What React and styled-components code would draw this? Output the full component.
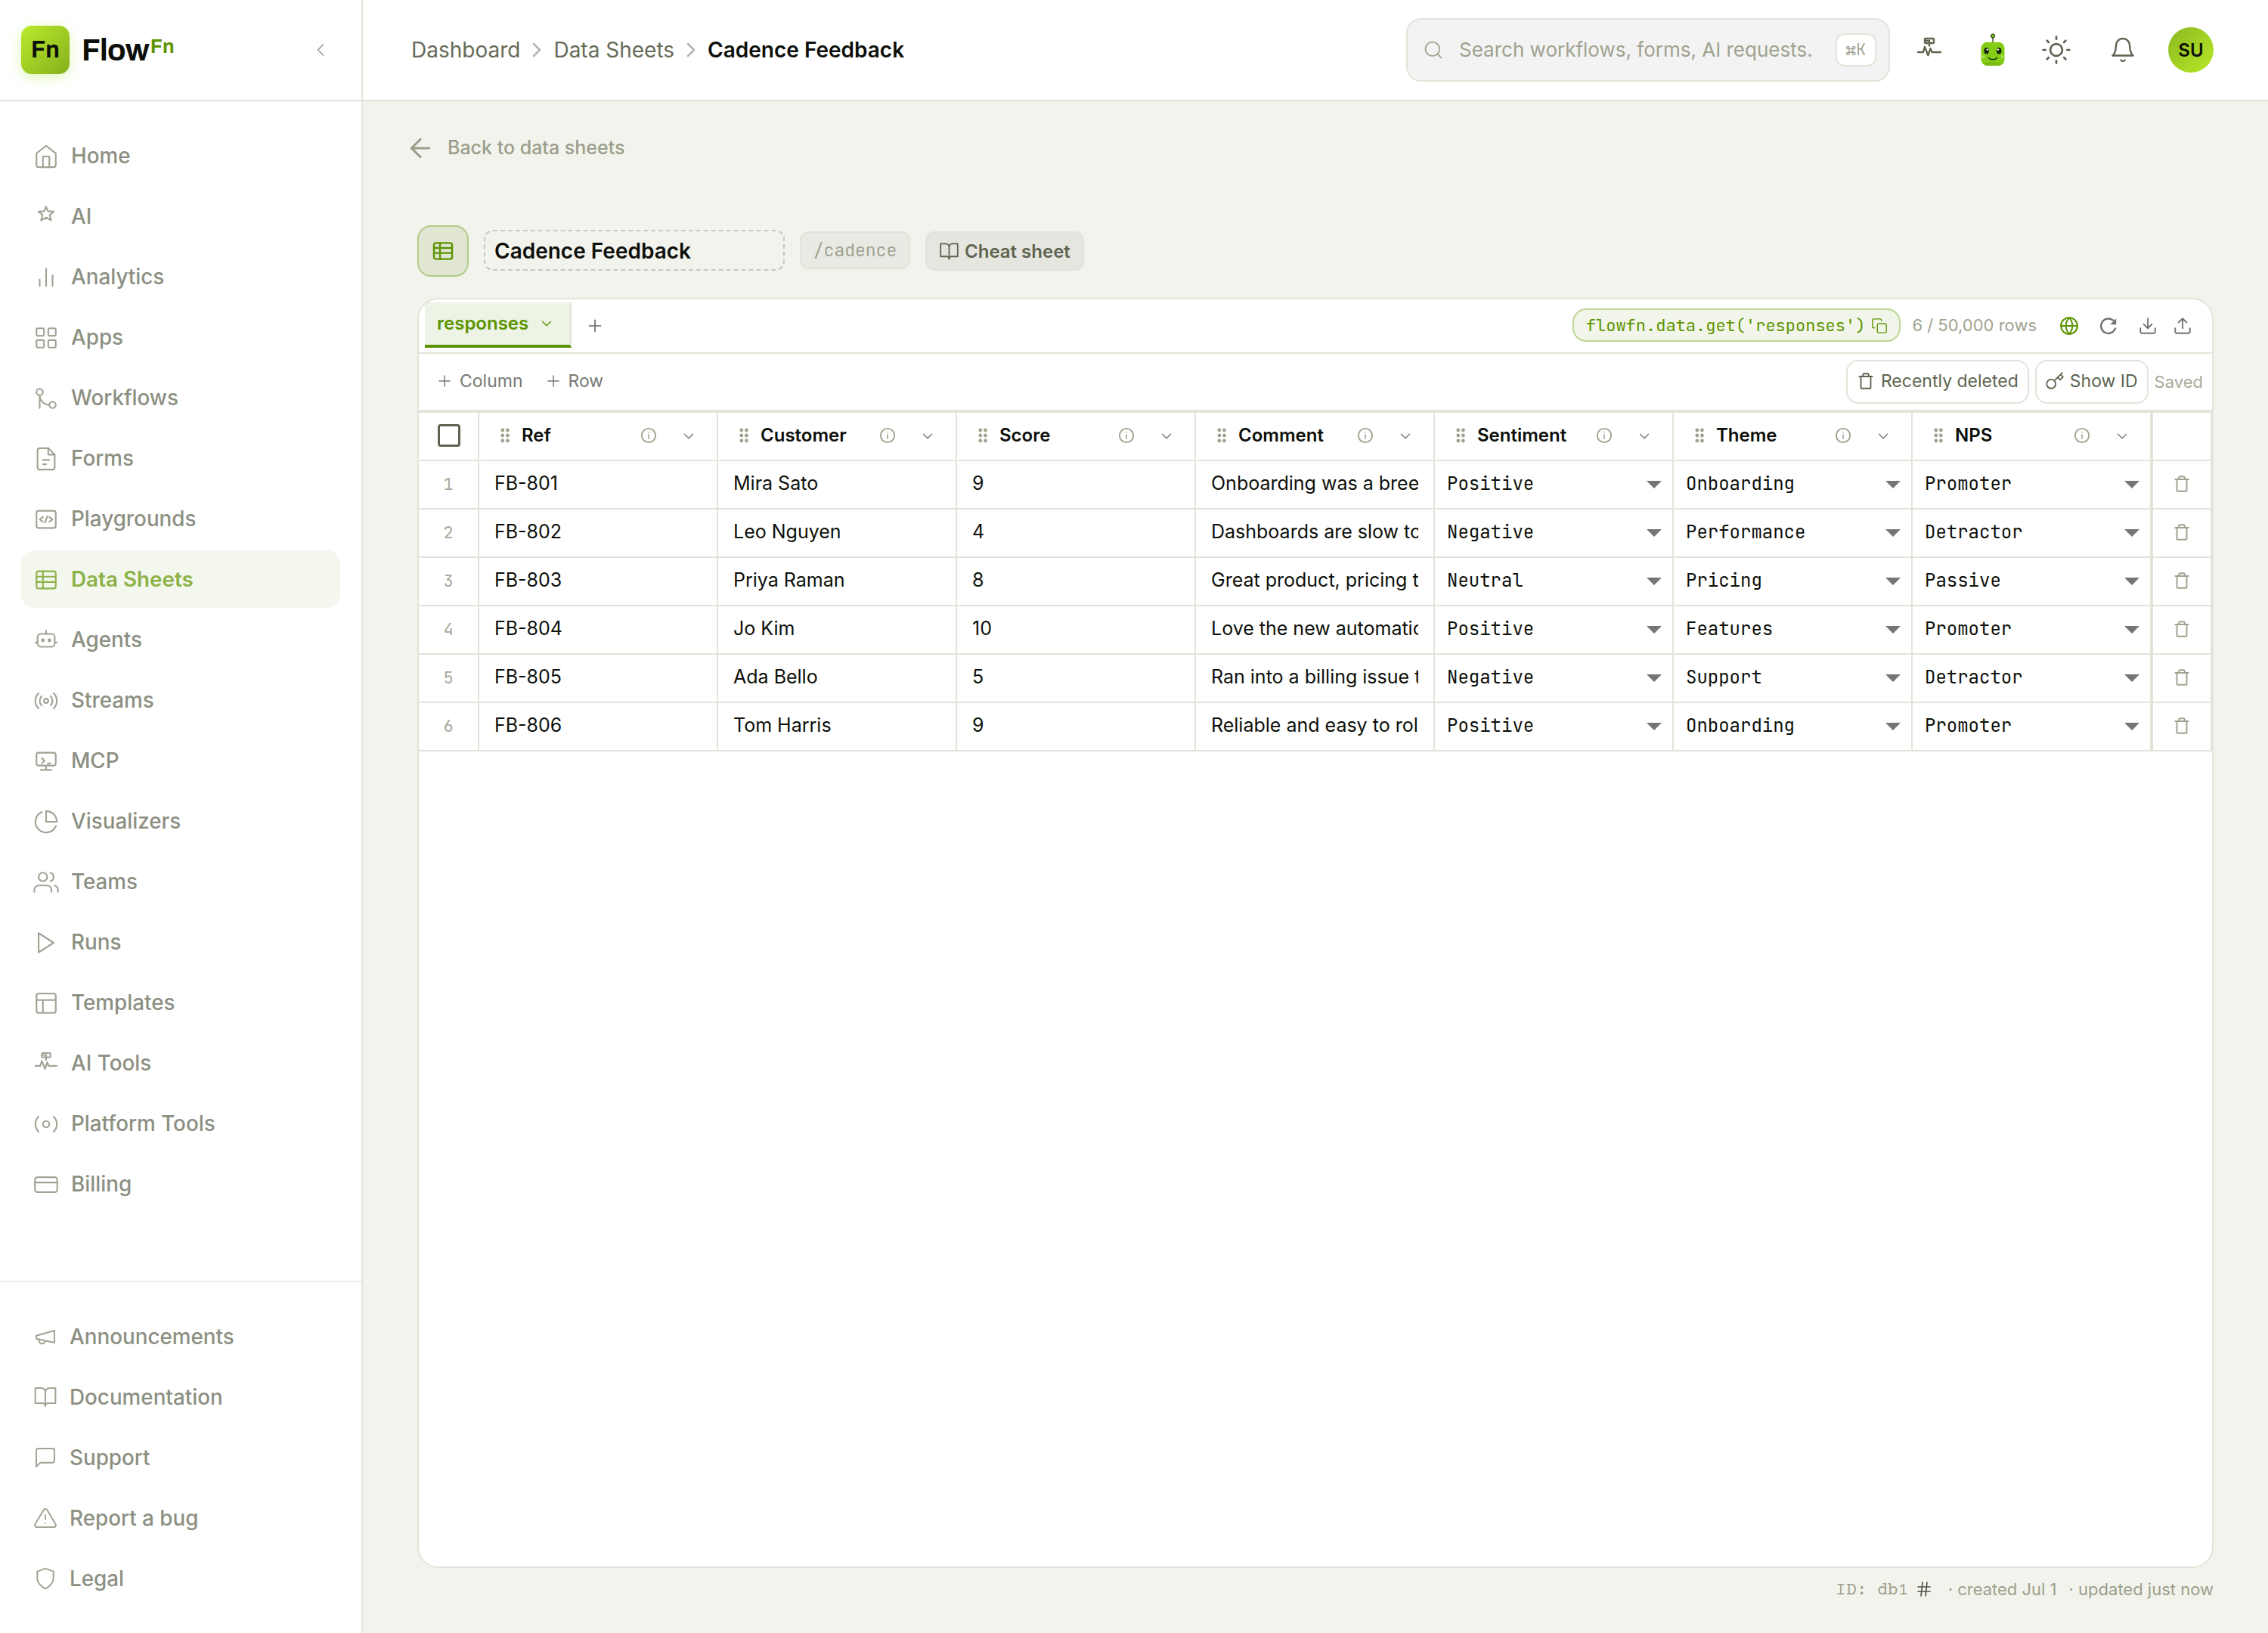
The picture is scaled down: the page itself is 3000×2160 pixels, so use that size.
import React from 'react';
import styled, { createGlobalStyle, css } from 'styled-components';

const sans = `Inter, "Liberation Sans", sans-serif`;
const display = `Archivo, "Liberation Sans", sans-serif`;
const mono = `"JetBrains Mono", "DejaVu Sans Mono", monospace`;
const courier = `"Courier Prime", "Liberation Mono", monospace`;

const c = {
  line: '#e2e4d9',
  lineSoft: '#ecede5',
  page: '#f2f3ec',
  ink: '#0d0f0a',
  text: '#666b58',
  muted: '#9fa28f',
  grey: '#777777',
  green: '#5c9400',
};

const GlobalStyle = createGlobalStyle`
  *, *::before, *::after { box-sizing: border-box; }
  body { margin: 0; background: ${c.page}; font-family: ${sans}; color: ${c.ink}; -webkit-font-smoothing: antialiased; }
  button { font: inherit; color: inherit; background: none; border: 0; padding: 0; margin: 0; }
  svg { display: block; flex: none; }
`;

/* ---------- icons ---------- */

const Icon = ({ size = 24, weight = 1.5, children }) => (
  <svg width={size} height={size} viewBox="0 0 24 24" fill="none" stroke="currentColor"
    strokeWidth={weight} strokeLinecap="round" strokeLinejoin="round">
    {children}
  </svg>
);

const glyphs = {
  home: <><path d="M3 9l9-7 9 7v11a2 2 0 0 1-2 2H5a2 2 0 0 1-2-2z" /><path d="M9 22V12h6v10" /></>,
  ai: <path d="M12 2.4l1.8 4.2 5.4.4-3.9 3.2 1.4 4.9-4.7-2.6-4.7 2.6 1.4-4.9L4.8 7l5.4-.4z" />,
  analytics: <path d="M18 20V10M12 20V4M6 20v-6" />,
  apps: <><rect x="3" y="3" width="7" height="7" rx="1" /><rect x="14" y="3" width="7" height="7" rx="1" /><rect x="14" y="14" width="7" height="7" rx="1" /><rect x="3" y="14" width="7" height="7" rx="1" /></>,
  workflows: <><circle cx="18" cy="18" r="3" /><circle cx="6" cy="6" r="3" /><path d="M6 21V9a9 9 0 0 0 9 9" /></>,
  forms: <><path d="M14 2H6a2 2 0 0 0-2 2v16a2 2 0 0 0 2 2h12a2 2 0 0 0 2-2V8z" /><path d="M14 2v6h6M9 13h6M9 17h3" /></>,
  playgrounds: <><rect x="3" y="4" width="18" height="16" rx="2" /><path d="M9 9.8L6 12l3 2.2M15 9.8l3 2.2-3 2.2M13.2 9l-2.2 6" /></>,
  sheets: <><rect x="3" y="4" width="18" height="16" rx="2" /><path d="M3 9h18M3 14h18M9 4v16" /></>,
  agents: <><rect x="4" y="6" width="16" height="12" rx="3" /><path d="M12 3v3M2 14h2M20 14h2" /><circle cx="9" cy="12" r="1" /><circle cx="15" cy="12" r="1" /></>,
  streams: <><circle cx="12" cy="12" r="2" /><path d="M16.24 7.76a6 6 0 0 1 0 8.49m-8.48-.01a6 6 0 0 1 0-8.49m11.31-2.82a10 10 0 0 1 0 14.14m-14.14 0a10 10 0 0 1 0-14.14" /></>,
  mcp: <><rect x="3" y="4" width="18" height="12" rx="2" /><path d="M7 20h10M12 16v4M8 9l2.6 2.5L8 14M13.5 14H16" /></>,
  visualizers: <><path d="M21.21 15.89A10 10 0 1 1 8 2.83" /><path d="M22 12A10 10 0 0 0 12 2v10z" /></>,
  teams: <><path d="M17 21v-2a4 4 0 0 0-4-4H5a4 4 0 0 0-4 4v2" /><circle cx="9" cy="7" r="4" /><path d="M23 21v-2a4 4 0 0 0-3-3.87M16 3.13a4 4 0 0 1 0 7.75" /></>,
  runs: <path d="M5 3l14 9-14 9z" />,
  templates: <><rect x="3" y="3" width="18" height="18" rx="2" /><path d="M3 9h18M9 21V9" /></>,
  aiTools: <><rect x="8" y="2" width="8" height="4" rx=".6" /><path d="M8.4 3.9h3.2M12 4v4.4M2 14h4.6L8 9.4l3 7.4 2-6L14.4 14H22" /></>,
  platform: <><circle cx="12" cy="12" r="3" /><path d="M19.07 4.93a10 10 0 0 1 0 14.14m-14.14 0a10 10 0 0 1 0-14.14" /></>,
  billing: <><rect x="1.6" y="5" width="20.8" height="14" rx="2.4" /><path d="M1.6 10h20.8" /></>,
  megaphone: <><path d="M3 11l18-5v12L3 14v-3z" /><path d="M11.6 16.8a3 3 0 1 1-5.8-1.6" /></>,
  book: <path d="M2 3h6a4 4 0 0 1 4 4v14a3 3 0 0 0-3-3H2zM22 3h-6a4 4 0 0 0-4 4v14a3 3 0 0 1 3-3h7z" />,
  message: <path d="M21 15a2 2 0 0 1-2 2H7l-4 4V5a2 2 0 0 1 2-2h14a2 2 0 0 1 2 2z" />,
  alert: <><path d="M10.29 3.86L1.82 18a2 2 0 0 0 1.71 3h16.94a2 2 0 0 0 1.71-3L13.71 3.86a2 2 0 0 0-3.42 0z" /><path d="M12 9v4M12 17h.01" /></>,
  shield: <path d="M12 22s8-4 8-10V5l-8-3-8 3v7c0 6 8 10 8 10z" />,
  left: <path d="M15 18l-6-6 6-6" />,
  right: <path d="M9 18l6-6-6-6" />,
  down: <path d="M6 9l6 6 6-6" />,
  arrowLeft: <path d="M19 12H5M12 19l-7-7 7-7" />,
  search: <><circle cx="11" cy="11" r="8" /><path d="M21 21l-4.35-4.35" /></>,
  sun: <><circle cx="12" cy="12" r="5" /><path d="M12 1v2M12 21v2M4.22 4.22l1.42 1.42M18.36 18.36l1.42 1.42M1 12h2M21 12h2M4.22 19.78l1.42-1.42M18.36 5.64l1.42-1.42" /></>,
  bell: <path d="M18 8A6 6 0 0 0 6 8c0 7-3 9-3 9h18s-3-2-3-9M13.73 21a2 2 0 0 1-3.46 0" />,
  plus: <path d="M12 5v14M5 12h14" />,
  copy: <><rect x="9" y="9" width="13" height="13" rx="2" /><path d="M5 15H4a2 2 0 0 1-2-2V4a2 2 0 0 1 2-2h9a2 2 0 0 1 2 2v1" /></>,
  globe: <><circle cx="12" cy="12" r="10" /><path d="M2 12h20M12 2a15.3 15.3 0 0 1 4 10 15.3 15.3 0 0 1-4 10 15.3 15.3 0 0 1-4-10 15.3 15.3 0 0 1 4-10z" /></>,
  refresh: <><path d="M20.4 15.2A9 9 0 1 1 17.6 5.2" /><path d="M21.4 3v7.4H14z" fill="currentColor" stroke="none" /></>,
  download: <path d="M21 15v4a2 2 0 0 1-2 2H5a2 2 0 0 1-2-2v-4M7 10l5 5 5-5M12 15V3" />,
  upload: <path d="M21 15v4a2 2 0 0 1-2 2H5a2 2 0 0 1-2-2v-4M17 8l-5-5-5 5M12 3v12" />,
  trash: <path d="M4 6.5h16M8.5 6.5v-2A1.5 1.5 0 0 1 10 3h4a1.5 1.5 0 0 1 1.5 1.5v2M6 6.5v13A1.5 1.5 0 0 0 7.5 21h9a1.5 1.5 0 0 0 1.5-1.5v-13" />,
  key: <path d="M21 2l-2 2m-7.61 7.61a5.5 5.5 0 1 1-7.778 7.778 5.5 5.5 0 0 1 7.777-7.777zm0 0L15.5 7.5m0 0l3 3L22 7l-3-3m-3.5 3.5L19 4" />,
  info: <><circle cx="12" cy="12" r="10" /><path d="M12 16.5V11M12 7.5h.01" strokeWidth="1.7" /></>,
  grip: <g fill="currentColor" stroke="none">{[5, 12, 19].map((y) => <React.Fragment key={y}><circle cx="8.8" cy={y} r="2.4" /><circle cx="15.4" cy={y} r="2.4" /></React.Fragment>)}</g>,
  hash: <path d="M4 9h16M4 15h16M10 3L8 21M16 3l-2 18" />,
};

const Robot = () => (
  <svg width="40" height="44" viewBox="0 0 40 44" fill="none">
    <path d="M20 5v8" stroke="#4b5a3a" strokeWidth="1.6" />
    <circle cx="20" cy="3.6" r="2.4" fill="#84cc16" stroke="#2c4a0c" strokeWidth="1.3" />
    <rect x="4.5" y="11.8" width="31" height="31" rx="8" fill="#84cc16" />
    <path d="M9 39.5c6-1.8 16-1.8 22 0 1 1.6-1 3.3-4 3.3H13c-3 0-5-1.7-4-3.3z" fill="#78bb12" />
    <ellipse cx="7" cy="31" rx="2.8" ry="2" fill="#a9dd55" />
    <ellipse cx="33" cy="31" rx="2.8" ry="2" fill="#a9dd55" />
    <ellipse cx="11.6" cy="23.2" rx="3.2" ry="4.3" fill="#16240a" />
    <ellipse cx="28.2" cy="23.2" rx="3.2" ry="4.3" fill="#16240a" />
    <circle cx="12.8" cy="21.6" r="1.2" fill="#fff" />
    <circle cx="27" cy="21.6" r="1.2" fill="#fff" />
    <path d="M14.4 32.4c3 3.2 8.2 3.2 11.2 0" stroke="#16240a" strokeWidth="1.4" strokeLinecap="round" />
  </svg>
);

/* ---------- shell ---------- */

const Shell = styled.div`display: flex; width: 3000px; height: 2160px; overflow: hidden;`;

const Sidebar = styled.aside`
  width: 480px; flex: none; display: flex; flex-direction: column;
  background: #fff; border-right: 2px solid ${c.line};
`;
const Brand = styled.div`
  height: 134px; flex: none; display: flex; align-items: center; padding: 0 40px 0 28px;
  border-bottom: 2px solid ${c.line};
`;
const LogoMark = styled.div`
  width: 64px; height: 64px; border-radius: 14px; display: grid; place-items: center;
  background: linear-gradient(135deg, #bbea2c, #84b01c);
  box-shadow: 0 4px 16px rgba(163, 230, 53, 0.35);
  font-family: ${display}; font-size: 31px; font-weight: 700; line-height: 1;
`;
const LogoText = styled.div`
  margin: 2px 0 0 16px; font-family: ${display}; font-size: 40px; font-weight: 700; letter-spacing: -0.8px;
  line-height: 48px; display: flex; align-items: flex-start;
`;
const LogoSup = styled.span`
  color: ${c.green}; font-size: 26px; line-height: 36px; margin-left: 2px; letter-spacing: 0;
`;
const Collapse = styled.button`margin-left: auto; color: #9a9e8c;`;

const Nav = styled.nav`
  display: flex; flex-direction: column; gap: 4px; padding: 34px 28px;
  ${(p) => p.$foot && css`margin-top: auto; border-top: 2px solid ${c.lineSoft};`}
`;
const NavItem = styled.a`
  height: 76px; display: flex; align-items: center; gap: 16px; padding: 0 16px; border-radius: 18px;
  font-size: 27.8px; font-weight: ${(p) => (p.$active ? 600 : 500)};
  color: ${(p) => (p.$active ? '#8cb248' : '#8c9082')};
  background: ${(p) => (p.$active ? '#f4f7ed' : 'transparent')};
  svg { margin-top: ${(p) => (p.$foot ? 0 : 2)}px; color: ${(p) => (p.$active ? '#8cb248' : '#a1a395')}; }
`;

const Main = styled.div`flex: 1; min-width: 0; display: flex; flex-direction: column;`;
const Header = styled.header`
  height: 134px; flex: none; display: flex; align-items: center; padding: 0 72px 0 64px;
  background: #fff; border-bottom: 2px solid ${c.line};
`;
const Crumbs = styled.div`
  display: flex; align-items: center; gap: 6px; font-size: 28px; color: ${c.text};
  svg { color: #b4b5af; }
`;
const Current = styled.span`font-weight: 600; color: ${c.ink};`;
const SearchBox = styled.div`
  margin-left: auto; width: 640px; height: 84px; display: flex; align-items: center; padding: 0 16px 0 20px;
  background: #f3f3f3; border: 2px solid ${c.line}; border-radius: 20px; color: ${c.muted}; font-size: 26px;
`;
const SearchText = styled.span`flex: 1; margin-left: 20px; padding-bottom: 1px; white-space: nowrap;`;
const Kbd = styled.span`
  height: 44px; width: 54px; display: grid; place-items: center; padding-bottom: 2px; background: #fff;
  border: 2px solid ${c.line}; border-radius: 12px; font: 300 22px ${mono};
`;
const HeaderButton = styled.button`
  width: ${(p) => p.$w || 72}px; height: 72px; margin-left: 12px; display: grid; place-items: center; color: #5d6450;
  &:first-of-type { margin-left: 16px; }
`;
const Avatar = styled.div`
  width: 60px; height: 60px; margin-left: 20px; border-radius: 50%; display: grid; place-items: center;
  background: linear-gradient(135deg, #8bb820, #b8e828); font-size: 24px; font-weight: 600;
`;

/* ---------- page head ---------- */

const Content = styled.main`flex: 1; display: flex; flex-direction: column; padding: 42px 72px 0;`;
const Back = styled.a`
  height: 40px; display: flex; align-items: center; gap: 16px; margin-left: -16px;
  color: #9b9e8b; font-size: 25px; font-weight: 500;
`;
const BackLabel = styled.span`padding-bottom: 2px;`;
const TitleRow = styled.div`height: 68px; display: flex; align-items: center; gap: 20px; margin-top: 82px;`;
const TypeBadge = styled.div`
  width: 68px; height: 68px; display: grid; place-items: center; border-radius: 18px;
  background: #e1e6d3; border: 2px solid #b2cc88; color: ${c.green};
`;
const TitleInput = styled.div`
  width: 398px; height: 54px; display: flex; align-items: center; margin-top: -2px; padding: 1px 12px 0;
  border: 2px dashed #c8cac2; border-radius: 12px; font-size: 28px; font-weight: 600;
`;
const Slug = styled.div`
  width: 146px; height: 50px; display: grid; place-items: center; margin-top: -2px; border-radius: 12px;
  background: #e9eae4; border: 2px solid #e2e3d9; color: #a0a390; font: 23px ${mono};
`;
const CheatSheet = styled.button`
  width: 210px; height: 52px; display: flex; align-items: center; gap: 7px; padding-left: 16px; border-radius: 12px;
  background: #e5e6df; border: 2px solid #e1e2d9; color: #5d6450; font-size: 24px; font-weight: 600;
`;

/* ---------- card ---------- */

const Card = styled.section`
  height: 1680px; margin-top: 28px; overflow: hidden; background: #fff;
  border: 2px solid ${c.line}; border-radius: 28px;
`;
const TabBar = styled.div`height: 72px; display: flex; padding: 4px 19px 0 8px; border-bottom: 2px solid ${c.line};`;
const Tab = styled.div`
  height: 60px; display: flex; align-items: center; gap: 13px; padding: 0 20px 0 16px; background: #edf3e5;
  border-right: 2px solid #dfe5d4; border-bottom: 4px solid ${c.green}; color: ${c.green}; font-size: 24px; font-weight: 600;
`;
const TabLabel = styled.span`padding-bottom: 1px;`;
const AddTab = styled.button`height: 62px; padding: 0 18px; color: #666;`;
const TabTools = styled.div`margin-left: auto; height: 60px; display: flex; align-items: center;`;
const CodeChip = styled.div`
  height: 44px; display: flex; align-items: center; gap: 8px; padding: 1px 15px 0 16px; background: #f2f6ea;
  border: 2px solid #bed594; border-radius: 18px; color: ${c.green}; font: 22px/1 ${mono}; font-variant-ligatures: none;
`;
const RowCount = styled.span`margin: 0 17px 0 15px; font-size: 22px; color: ${c.muted};`;
const ToolButton = styled.button`
  width: ${(p) => p.$w || 52}px; height: 44px; display: grid; place-items: center; padding-top: 2px;
  color: ${(p) => (p.$on ? c.green : '#6f6f6f')};
`;

const Toolbar = styled.div`
  height: 74px; display: flex; align-items: center; padding: 0 12px 0 22px; font-size: 23px; color: #777a74;
`;
const AddLink = styled.button`display: flex; align-items: center; gap: 8px; margin-right: 28px; padding-bottom: 2px;`;
const Pill = styled.button`
  height: 58px; display: flex; align-items: center; gap: 7px; margin-right: 8px; padding: 0 12px 2px 11px;
  border: 2px solid ${c.line}; border-radius: 16px; color: #5d6450;
`;
const Spacer = styled.div`flex: 1;`;
const Saved = styled.span`padding-bottom: 1px; font-size: 22px; color: #a6a998;`;

/* ---------- sheet ---------- */

const Sheet = styled.div`border-top: 4px solid ${c.line};`;
const SheetRow = styled.div`display: grid; grid-template-columns: 80px repeat(7, 316px) 80px; height: 64px;`;
const HeadCell = styled.div`
  display: flex; align-items: center; padding: 0 26px 2px 20px; border-left: 2px solid #fff;
  border-right: 2px solid ${c.line}; border-bottom: 2px solid ${c.line}; color: ${c.muted};
`;
const HeadLabel = styled.span`
  flex: 1; margin-left: 10px; padding-bottom: 1px; color: ${c.ink}; font-size: 24px; font-weight: 600;
`;
const Chevron = styled.span`margin-left: 31px; padding-top: 2px; color: ${c.grey};`;
const SelectCell = styled(HeadCell)`justify-content: center; padding: 0 0 2px;`;
const Checkbox = styled.span`width: 30px; height: 30px; border: 3px solid #5d6450; border-radius: 4px; background: #fff;`;
const Cell = styled.div`
  min-width: 0; display: flex; align-items: center; padding: 0 20px 4px;
  border-right: 2px solid ${c.line}; border-bottom: 2px solid ${c.line}; font-size: 25px;
`;
const CellText = styled.span`flex: 1; min-width: 0; overflow: hidden; white-space: nowrap; line-height: 40px;`;
const IndexCell = styled(Cell)`justify-content: center; padding: 0 0 2px; color: #a6a998; font: 22px ${mono};`;
const ChoiceCell = styled(Cell)`justify-content: space-between; padding: 0 14px 3px 16px; font: 24px ${mono};`;
const Caret = styled.span`
  margin-top: 3px; border: 10px solid transparent; border-top-color: #757575; border-bottom: 0;
`;
const ActionCell = styled(Cell)`
  justify-content: center; padding: 0 0 2px; border-left: 2px solid ${c.line}; color: #a0a390;
`;

const Footer = styled.footer`
  height: 56px; display: flex; align-items: center; justify-content: flex-end; font-size: 22px; color: #9b9f8b;
`;
const SheetId = styled.span`font: 23px ${courier}; white-space: pre; padding-top: 3px;`;
const HashButton = styled.button`margin: 0 20px 0 8px; color: #4d5140;`;
const Meta = styled.span`& + & { margin-left: 16px; }`;

/* ---------- data ---------- */

const primary = [
  ['home', 'Home'], ['ai', 'AI'], ['analytics', 'Analytics'], ['apps', 'Apps'], ['workflows', 'Workflows'],
  ['forms', 'Forms'], ['playgrounds', 'Playgrounds'], ['sheets', 'Data Sheets'], ['agents', 'Agents'],
  ['streams', 'Streams'], ['mcp', 'MCP'], ['visualizers', 'Visualizers'], ['teams', 'Teams'], ['runs', 'Runs'],
  ['templates', 'Templates'], ['aiTools', 'AI Tools'], ['platform', 'Platform Tools'], ['billing', 'Billing'],
];
const secondary = [
  ['megaphone', 'Announcements'], ['book', 'Documentation'], ['message', 'Support'],
  ['alert', 'Report a bug'], ['shield', 'Legal'],
];
const columns = ['Ref', 'Customer', 'Score', 'Comment', 'Sentiment', 'Theme', 'NPS'];
const rows = [
  ['FB-801', 'Mira Sato', '9', 'Onboarding was a breeze', 'Positive', 'Onboarding', 'Promoter'],
  ['FB-802', 'Leo Nguyen', '4', 'Dashboards are slow today', 'Negative', 'Performance', 'Detractor'],
  ['FB-803', 'Priya Raman', '8', 'Great product, pricing tiers', 'Neutral', 'Pricing', 'Passive'],
  ['FB-804', 'Jo Kim', '10', 'Love the new automations', 'Positive', 'Features', 'Promoter'],
  ['FB-805', 'Ada Bello', '5', 'Ran into a billing issue too', 'Negative', 'Support', 'Detractor'],
  ['FB-806', 'Tom Harris', '9', 'Reliable and easy to roll', 'Positive', 'Onboarding', 'Promoter'],
];

export default function App() {
  return (
    <Shell>
      <GlobalStyle />
      <Sidebar>
        <Brand>
          <LogoMark>Fn</LogoMark>
          <LogoText>Flow<LogoSup>Fn</LogoSup></LogoText>
          <Collapse><Icon size={28}>{glyphs.left}</Icon></Collapse>
        </Brand>
        <Nav>
          {primary.map(([icon, label]) => (
            <NavItem key={label} $active={icon === 'sheets'}>
              <Icon size={34}>{glyphs[icon]}</Icon>{label}
            </NavItem>
          ))}
        </Nav>
        <Nav $foot>
          {secondary.map(([icon, label]) => (
            <NavItem key={label} $foot><Icon size={32}>{glyphs[icon]}</Icon>{label}</NavItem>
          ))}
        </Nav>
      </Sidebar>

      <Main>
        <Header>
          <Crumbs>
            <span>Dashboard</span>
            <Icon size={32} weight={2}>{glyphs.right}</Icon>
            <span>Data Sheets</span>
            <Icon size={32} weight={2}>{glyphs.right}</Icon>
            <Current>Cadence Feedback</Current>
          </Crumbs>
          <SearchBox>
            <Icon size={28}>{glyphs.search}</Icon>
            <SearchText>Search workflows, forms, AI requests.</SearchText>
            <Kbd>⌘K</Kbd>
          </SearchBox>
          <HeaderButton><Icon size={36} weight={1.6}>{glyphs.aiTools}</Icon></HeaderButton>
          <HeaderButton><Robot /></HeaderButton>
          <HeaderButton><Icon size={38} weight={1.7}>{glyphs.sun}</Icon></HeaderButton>
          <HeaderButton $w={80}><Icon size={36} weight={1.6}>{glyphs.bell}</Icon></HeaderButton>
          <Avatar>SU</Avatar>
        </Header>

        <Content>
          <Back><Icon size={40} weight={1.8}>{glyphs.arrowLeft}</Icon><BackLabel>Back to data sheets</BackLabel></Back>
          <TitleRow>
            <TypeBadge><Icon size={32} weight={1.8}>{glyphs.sheets}</Icon></TypeBadge>
            <TitleInput>Cadence Feedback</TitleInput>
            <Slug>/cadence</Slug>
            <CheatSheet><Icon size={27} weight={1.6}>{glyphs.book}</Icon>Cheat sheet</CheatSheet>
          </TitleRow>

          <Card>
            <TabBar>
              <Tab><TabLabel>responses</TabLabel><Icon size={22}>{glyphs.down}</Icon></Tab>
              <AddTab><Icon size={26}>{glyphs.plus}</Icon></AddTab>
              <TabTools>
                <CodeChip>flowfn.data.get('responses')<Icon size={22}>{glyphs.copy}</Icon></CodeChip>
                <RowCount>6 / 50,000 rows</RowCount>
                <ToolButton $on><Icon size={26} weight={1.9}>{glyphs.globe}</Icon></ToolButton>
                <ToolButton><Icon size={26} weight={2.2}>{glyphs.refresh}</Icon></ToolButton>
                <ToolButton><Icon size={26} weight={1.7}>{glyphs.download}</Icon></ToolButton>
                <ToolButton $w={40}><Icon size={26} weight={1.7}>{glyphs.upload}</Icon></ToolButton>
              </TabTools>
            </TabBar>
            <Toolbar>
              <AddLink><Icon size={24}>{glyphs.plus}</Icon>Column</AddLink>
              <AddLink><Icon size={24}>{glyphs.plus}</Icon>Row</AddLink>
              <Spacer />
              <Pill><Icon size={26} weight={1.7}>{glyphs.trash}</Icon>Recently deleted</Pill>
              <Pill><Icon size={26} weight={1.7}>{glyphs.key}</Icon>Show ID</Pill>
              <Saved>Saved</Saved>
            </Toolbar>
            <Sheet>
              <SheetRow>
                <SelectCell><Checkbox /></SelectCell>
                {columns.map((name) => (
                  <HeadCell key={name}>
                    <Icon size={24}>{glyphs.grip}</Icon>
                    <HeadLabel>{name}</HeadLabel>
                    <Icon size={22} weight={2}>{glyphs.info}</Icon>
                    <Chevron><Icon size={22}>{glyphs.down}</Icon></Chevron>
                  </HeadCell>
                ))}
                <ActionCell />
              </SheetRow>
              {rows.map((row, i) => (
                <SheetRow key={row[0]}>
                  <IndexCell>{i + 1}</IndexCell>
                  {row.slice(0, 4).map((value, j) => <Cell key={j}><CellText>{value}</CellText></Cell>)}
                  {row.slice(4).map((value, j) => <ChoiceCell key={j}>{value}<Caret /></ChoiceCell>)}
                  <ActionCell><Icon size={26} weight={1.8}>{glyphs.trash}</Icon></ActionCell>
                </SheetRow>
              ))}
            </Sheet>
          </Card>
          <Footer>
            <SheetId>ID: db1</SheetId>
            <HashButton><Icon size={24} weight={1.6}>{glyphs.hash}</Icon></HashButton>
            <Meta>· created Jul 1</Meta>
            <Meta>· updated just now</Meta>
          </Footer>
        </Content>
      </Main>
    </Shell>
  );
}
